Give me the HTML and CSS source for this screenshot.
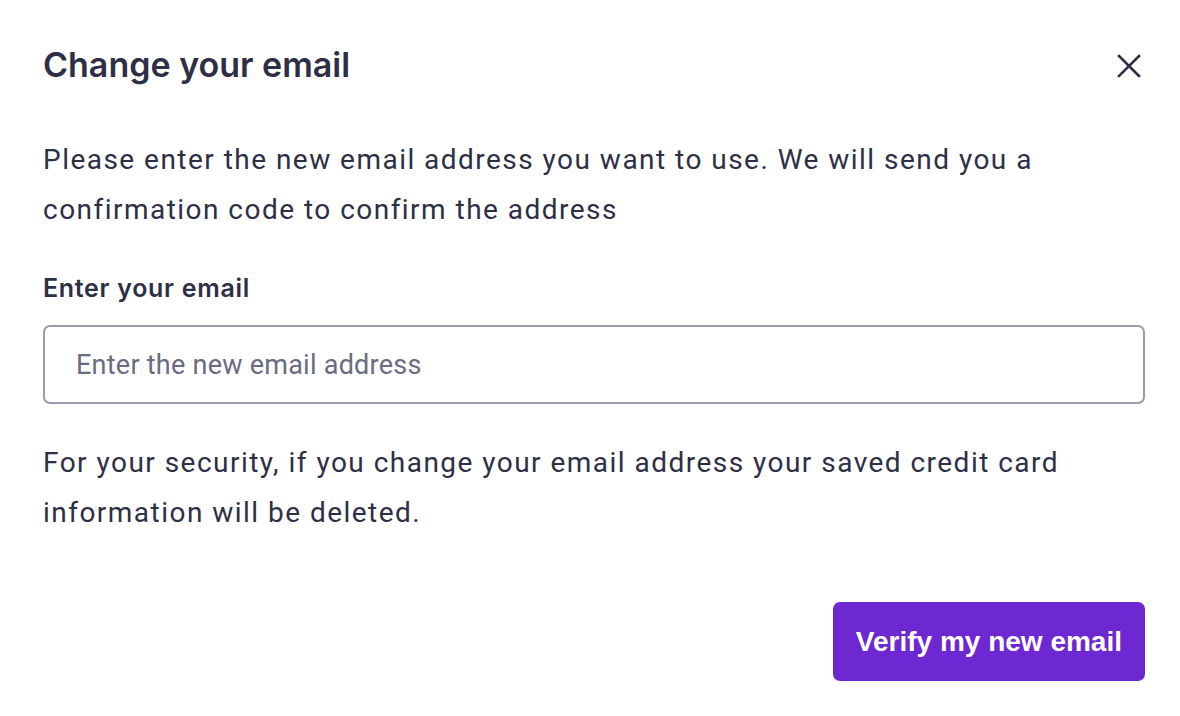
FILE: index.html
```html
<!DOCTYPE html>
<html lang="en">
<head>
  <meta charset="utf-8">
  <title>Change your email</title>
  <link rel="stylesheet" href="styles.css">
</head>
<body>
  <div class="modal">
    <div class="modal-header">
      <h2 class="modal-title">Change your email</h2>
      <button class="close" type="button" aria-label="Close">
        <svg width="24" height="24" viewBox="0 0 24 24">
          <path d="M2 2 L22 22 M22 2 L2 22" stroke="#2d2f45" stroke-width="2.6" stroke-linecap="square"/>
        </svg>
      </button>
    </div>

    <p class="text">Please enter the new email address you want to use. We will send you a confirmation code to confirm the address</p>

    <label class="field">
      <span class="field-label">Enter your email</span>
      <input class="field-input" type="email" placeholder="Enter the new email address">
    </label>

    <p class="text">For your security, if you change your email address your saved credit card information will be deleted.</p>

    <div class="modal-footer">
      <button class="btn-primary" type="button">Verify my new email</button>
    </div>
  </div>
</body>
</html>
```

FILE: styles.css
```css
*, *::before, *::after {
  box-sizing: border-box;
}
body {
  margin: 0;
  background: #fff;
  color: #2d2f45;
  font-family: Roboto, "Liberation Sans", sans-serif;
}

.modal {
  padding: 41px 35px 34px 43px;
}
.modal-header {
  display: flex;
  align-items: center;
  justify-content: space-between;
  height: 46px;
}
.modal-title {
  margin: 0;
  font-family: Inter, sans-serif;
  font-size: 34px;
  font-weight: 600;
}
.close {
  border: none;
  background: none;
  padding: 0;
  margin: 4px 4px 0 0;
  width: 24px;
  height: 24px;
  cursor: pointer;
}

.text {
  margin: 0;
  font-size: 28px;
  font-weight: 400;
  letter-spacing: 1.47px;
  line-height: 50px;
}
.modal-header + .text {
  margin-top: 48px;
}

.field {
  display: flex;
  flex-direction: column;
  margin-top: 38px;
}
.field-label {
  font-family: Inter, sans-serif;
  font-size: 25px;
  font-weight: 600;
  letter-spacing: 0.7px;
  line-height: 30px;
}
.field-input {
  margin-top: 22px;
  height: 79px;
  padding: 0 31px;
  border: 2px solid #9c9aae;
  border-radius: 7px;
  font-family: Roboto, sans-serif;
  font-size: 27px;
  letter-spacing: 0.25px;
  color: #2d2f45;
  outline: none;
}
.field-input::placeholder {
  color: #6a6b80;
}
.field + .text {
  margin-top: 34px;
}

.modal-footer {
  display: flex;
  justify-content: flex-end;
  margin-top: 64px;
}
.btn-primary {
  height: 79px;
  padding: 0 23px;
  border: none;
  border-radius: 7px;
  background: #6d28d2;
  color: #fff;
  font-family: "Liberation Sans", Arial, sans-serif;
  font-size: 28px;
  font-weight: 700;
  cursor: pointer;
}
```
